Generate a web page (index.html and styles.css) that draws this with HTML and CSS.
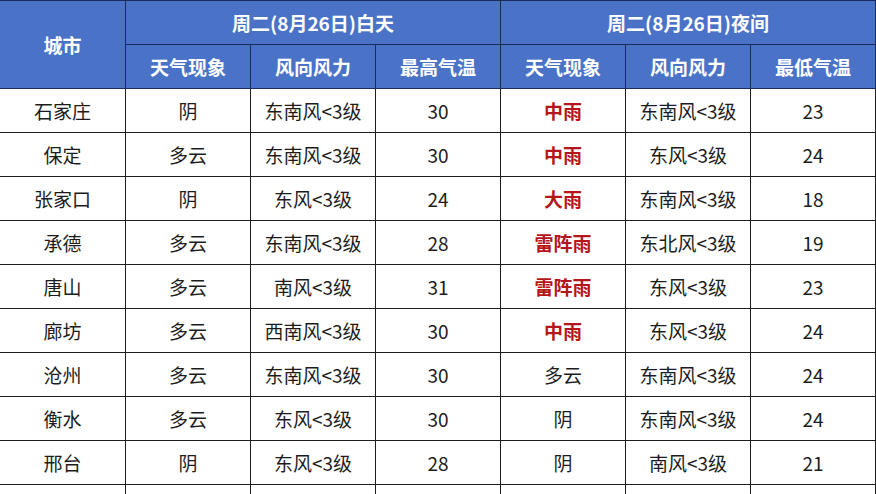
FILE: index.html
```html
<!DOCTYPE html>
<html lang="zh-CN">
<head>
<meta charset="utf-8">
<title>天气预报</title>
<link rel="stylesheet" href="styles.css">
</head>
<body>
<div class="grid">
  <div class="h city">城市</div>
  <div class="h span3">周二(8月26日)白天</div>
  <div class="h span3">周二(8月26日)夜间</div>
  <div class="h">天气现象</div>
  <div class="h">风向风力</div>
  <div class="h">最高气温</div>
  <div class="h">天气现象</div>
  <div class="h">风向风力</div>
  <div class="h">最低气温</div>

  <div class="c">石家庄</div><div class="c">阴</div><div class="c">东南风&lt;3级</div><div class="c">30</div><div class="c red">中雨</div><div class="c">东南风&lt;3级</div><div class="c">23</div>
  <div class="c">保定</div><div class="c">多云</div><div class="c">东南风&lt;3级</div><div class="c">30</div><div class="c red">中雨</div><div class="c">东风&lt;3级</div><div class="c">24</div>
  <div class="c">张家口</div><div class="c">阴</div><div class="c">东风&lt;3级</div><div class="c">24</div><div class="c red">大雨</div><div class="c">东南风&lt;3级</div><div class="c">18</div>
  <div class="c">承德</div><div class="c">多云</div><div class="c">东南风&lt;3级</div><div class="c">28</div><div class="c red">雷阵雨</div><div class="c">东北风&lt;3级</div><div class="c">19</div>
  <div class="c">唐山</div><div class="c">多云</div><div class="c">南风&lt;3级</div><div class="c">31</div><div class="c red">雷阵雨</div><div class="c">东风&lt;3级</div><div class="c">23</div>
  <div class="c">廊坊</div><div class="c">多云</div><div class="c">西南风&lt;3级</div><div class="c">30</div><div class="c red">中雨</div><div class="c">东风&lt;3级</div><div class="c">24</div>
  <div class="c">沧州</div><div class="c">多云</div><div class="c">东南风&lt;3级</div><div class="c">30</div><div class="c">多云</div><div class="c">东南风&lt;3级</div><div class="c">24</div>
  <div class="c">衡水</div><div class="c">多云</div><div class="c">东风&lt;3级</div><div class="c">30</div><div class="c">阴</div><div class="c">东南风&lt;3级</div><div class="c">24</div>
  <div class="c">邢台</div><div class="c">阴</div><div class="c">东风&lt;3级</div><div class="c">28</div><div class="c">阴</div><div class="c">南风&lt;3级</div><div class="c">21</div>
  <div class="c"></div><div class="c"></div><div class="c"></div><div class="c"></div><div class="c"></div><div class="c"></div><div class="c"></div>
</div>
</body>
</html>
```

FILE: styles.css
```css
html, body {
  margin: 0;
  padding: 0;
  background: #ffffff;
  overflow: hidden;
}

body {
  font-family: "Noto Sans CJK SC", "Noto Sans", sans-serif;
  font-size: 19px;
  color: #1c1c1c;
}

.grid {
  display: grid;
  grid-template-columns: 126px 125px 125px 125px 125px 125px 125px;
  grid-auto-rows: 44px;
  width: 876px;
  border-top: 1px solid #1c2b5e;
}

.h, .c {
  display: flex;
  align-items: center;
  justify-content: center;
  box-sizing: border-box;
  border-right: 1px solid #1e1e1e;
  border-bottom: 1px solid #1e1e1e;
  white-space: nowrap;
}

.h {
  background: #4a73c8;
  color: #ffffff;
  font-weight: 700;
  border-right-color: #1c2b5e;
  border-bottom-color: #1c2b5e;
}

.city {
  grid-row: span 2;
}

.span3 {
  grid-column: span 3;
}

.c {
  background: #ffffff;
}

.red {
  color: #b5161c;
  font-weight: 700;
}
```
